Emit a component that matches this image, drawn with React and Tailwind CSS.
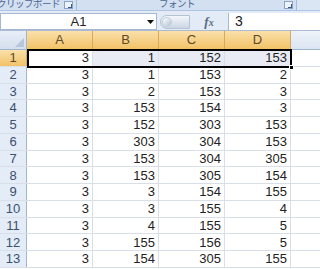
import React from "react";

const data = [
  [3, 1, 152, 153],
  [3, 1, 153, 2],
  [3, 2, 153, 3],
  [3, 153, 154, 3],
  [3, 152, 303, 153],
  [3, 303, 304, 153],
  [3, 153, 304, 305],
  [3, 153, 305, 154],
  [3, 3, 154, 155],
  [3, 3, 155, 4],
  [3, 4, 155, 5],
  [3, 155, 156, 5],
  [3, 154, 305, 155],
];

const font = { fontFamily: '"Liberation Sans", "Noto Sans CJK JP", sans-serif' };

function Launcher() {
  return (
    <div className="w-[9px] h-[8px] border border-[#8aa2c4] bg-[#eef3fa] flex items-end justify-end">
      <div className="w-[4px] h-[4px] border-r border-b border-[#3b5a85]" />
    </div>
  );
}

export default function App() {
  return (
    <div className="w-[320px] h-[269px] overflow-hidden bg-white flex flex-col text-[#222] relative" style={font}>
      {/* ribbon labels */}
      <div className="shrink-0 h-[11px] bg-[#d3e0f1] flex text-[9.5px] leading-[10px] text-[#4a6490] overflow-hidden border-b border-[#aec4e2]">
        <div className="w-[76px] flex items-end pb-[1px]">
          <div className="w-[60px] flex justify-end">
            <span className="whitespace-nowrap tracking-[-0.5px]">クリップボード</span>
          </div>
          <div className="ml-[4px]"><Launcher /></div>
        </div>
        <div className="w-px h-full bg-[#a5bcdc]" />
        <div className="w-[219px] flex items-end pb-[1px]">
          <span className="ml-[82px] whitespace-nowrap tracking-[-0.5px]">フォント</span>
          <div className="ml-auto mr-[3px]"><Launcher /></div>
        </div>
        <div className="w-px h-full bg-[#a5bcdc]" />
        <div className="flex-1 bg-[#dbe6f4]" />
      </div>
      <div className="shrink-0 h-[2px] bg-[#e3ebf6]" />
      {/* formula bar */}
      <div className="shrink-0 h-[18px] bg-[#e3ebf6] flex items-center border-b border-[#aabbd3]">
        <div className="w-[157px] h-[17px] bg-white border border-[#a6b8d0] flex items-center text-[13px]">
          <div className="flex-1 text-center pl-[12px]">A1</div>
          <div className="w-[12px] flex justify-center">
            <svg width="7" height="4" viewBox="0 0 7 4"><path d="M0 0h7L3.5 4z" fill="#111" /></svg>
          </div>
        </div>
        <div className="ml-[3px] w-[30px] h-[14px] rounded-l-full bg-gradient-to-b from-[#f4f7fb] to-[#cbd6e4] border border-[#b4c2d4] flex items-center pl-[1px]">
          <div className="w-[10px] h-[10px] rounded-full bg-gradient-to-br from-white to-[#b7c3d3] border border-[#c3cfdd]" />
        </div>
        <div className="w-[38px] text-center text-[13px] italic font-bold text-[#5a6a80]" style={{ fontFamily: '"Liberation Serif", serif' }}>
          f<span className="text-[10px]">x</span>
        </div>
        <div className="flex-1 h-[17px] bg-white border-l border-[#a6b8d0] flex items-center pl-[6px] text-[14px]">3</div>
      </div>
      {/* sheet */}
      <div className="shrink-0 flex flex-col">
        <div className="flex h-[19px] border-b border-[#9eb6ce]">
          <div className="w-[27px] bg-gradient-to-b from-[#e7eef8] to-[#d4dfee] border-r border-[#9eb6ce] relative">
            <svg className="absolute right-[2px] bottom-[2px]" width="9" height="9" viewBox="0 0 9 9"><path d="M9 0V9H0z" fill="#b6c6db" /></svg>
          </div>
          {["A", "B", "C", "D"].map((c) => (
            <div key={c} className="w-[66px] bg-gradient-to-b from-[#fae0aa] to-[#f2c266] border-r border-[#d9a85a] flex items-center justify-center text-[13px] text-[#5b4b2a]">
              {c}
            </div>
          ))}
          <div className="flex-1 bg-gradient-to-b from-[#eef3fa] to-[#dbe5f2]" />
        </div>
        {data.map((row, i) => (
          <div key={i} className="flex h-[16.77px] border-b border-[#d8dfe9]">
            <div
              className={
                i === 0
                  ? "w-[27px] bg-gradient-to-b from-[#fae0aa] to-[#f2c266] border-r border-[#d9a85a] text-[#5b4b2a] flex items-center justify-center text-[13px]"
                  : "w-[27px] bg-[#e4ecf7] border-r border-[#9eb6ce] text-[#3b4f6e] flex items-center justify-center text-[13px]"
              }
            >
              {i + 1}
            </div>
            {row.map((v, j) => (
              <div
                key={j}
                className={
                  "w-[66px] border-r border-[#d8dfe9] flex items-center justify-end pr-[3px] text-[13px] " +
                  (i === 0 && j > 0 ? "bg-[#e8ebf3]" : "bg-white")
                }
              >
                {v}
              </div>
            ))}
            <div className="flex-1 bg-white" />
          </div>
        ))}
      </div>
      {/* selection border */}
      <div className="absolute left-[27px] top-[49px] w-[265px] h-[19px] border-2 border-black pointer-events-none">
        <div className="absolute -right-[4px] -bottom-[4px] w-[5px] h-[5px] bg-black border border-white" />
      </div>
    </div>
  );
}
